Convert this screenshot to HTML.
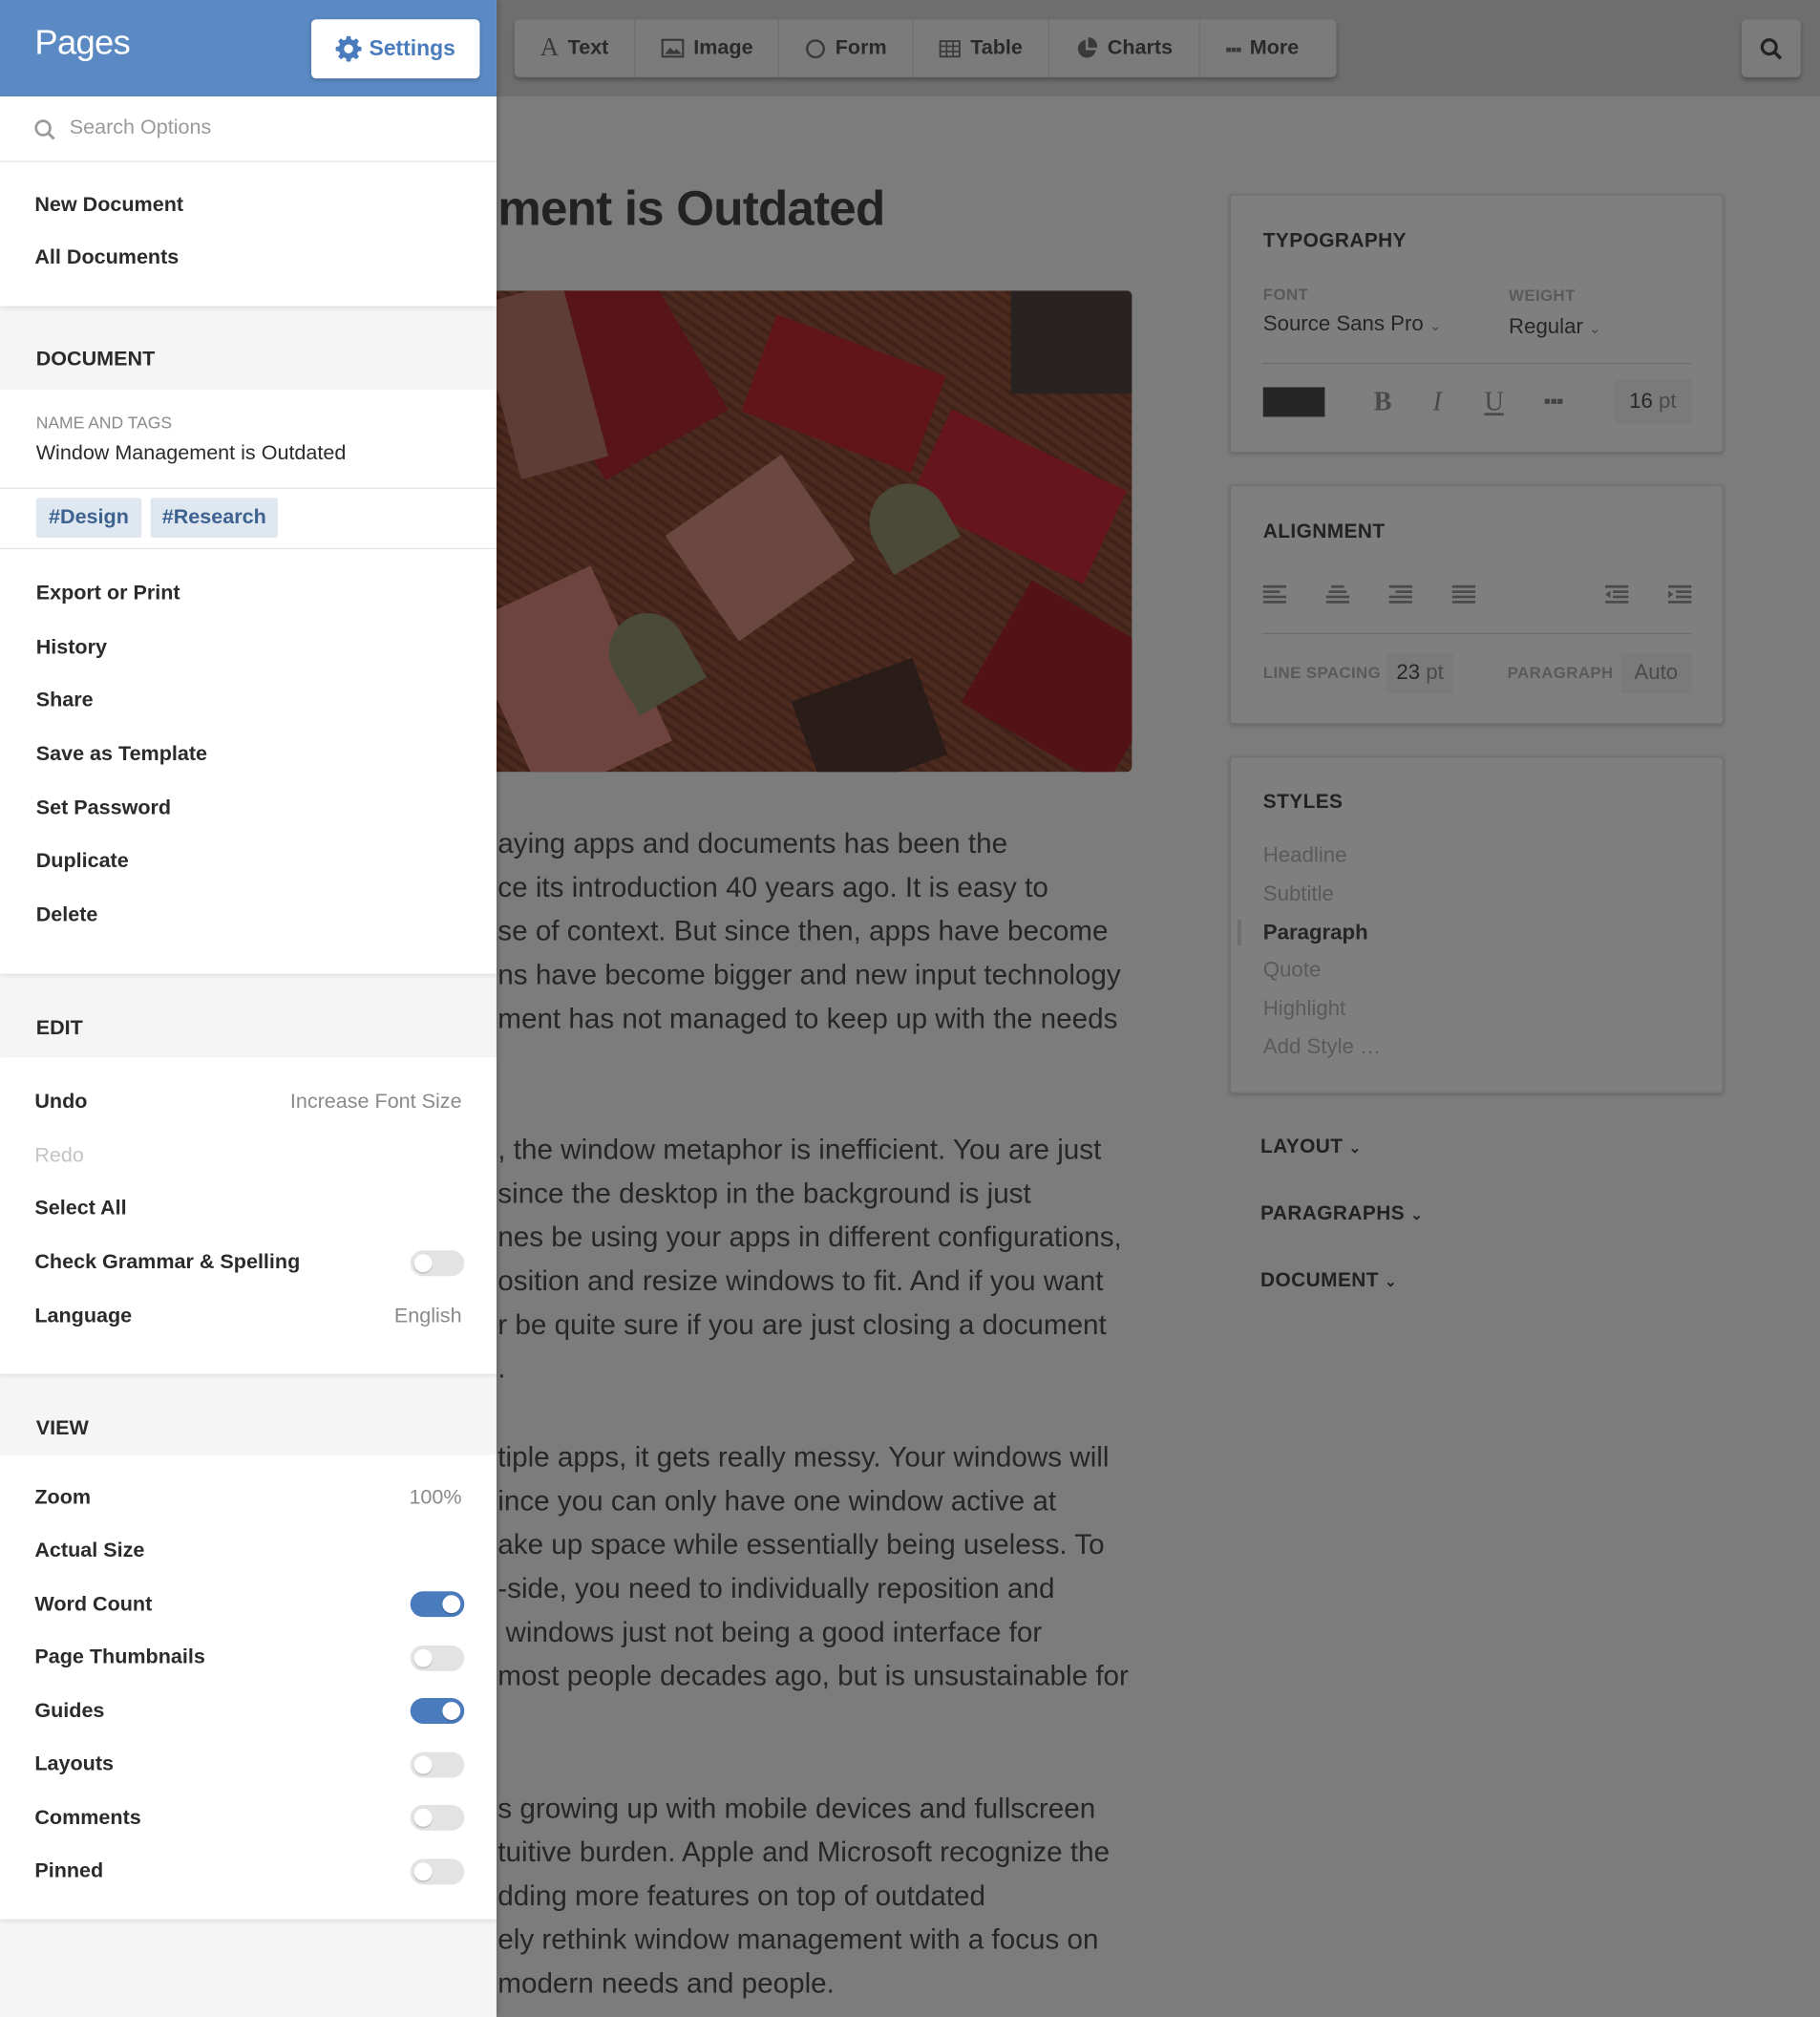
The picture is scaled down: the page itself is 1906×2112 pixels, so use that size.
<!DOCTYPE html>
<html><head><meta charset="utf-8"><style>
*{box-sizing:border-box;margin:0;padding:0}
html,body{width:1906px;height:2112px;overflow:hidden;background:#7c7c7c}
#r{position:absolute;left:0;top:0;width:1415px;height:1568px;transform:scale(1.34700);transform-origin:0 0;font-family:"Liberation Sans",sans-serif;background:#7c7c7c;overflow:hidden}
.a{position:absolute;white-space:nowrap}
.top{left:386px;top:0;width:1029px;height:75px;background:#6e6e6e}
.tb{left:400px;top:15px;width:639px;height:45px;background:#7b7b7b;border-radius:4px;box-shadow:0 2px 3px rgba(0,0,0,.25);display:flex;align-items:center;font-size:16px;font-weight:bold;color:#2a2a2a}
.tb div{padding:0 20px;border-right:1px solid #707070;height:45px;display:flex;align-items:center;gap:7px}
.tb div:last-child{border:none}
.ico{color:#3a3a3a;font-weight:normal}
.body{left:387px;font-size:22px;color:#262626;line-height:34px}
.pan{left:956px;width:384px;background:#7f7f7f;border:1px solid #717171;border-radius:3px;box-shadow:0 1px 3px rgba(0,0,0,.2)}
.h{font-size:15.5px;font-weight:bold;color:#222;letter-spacing:.3px}
.lab{font-size:12.5px;color:#5a5a5a;font-weight:bold;letter-spacing:.3px}
.sb{left:0;top:0;width:386px;height:1568px;background:#f5f5f5;box-shadow:2px 0 4px rgba(0,0,0,.15)}
.w{position:absolute;left:0;width:386px;background:#fff}
.it{position:absolute;left:27px;font-size:16px;font-weight:bold;color:#2b2b2b;transform:translateY(-50%)}
.rt{position:absolute;right:27px;font-size:16px;color:#8a8a8a;transform:translateY(-50%)}
.sh{position:absolute;left:28px;font-size:16px;font-weight:bold;color:#2b2b2b;transform:translateY(-50%)}
.tg{position:absolute;left:319px;width:42px;height:20px;border-radius:10px;background:#e3e3e3;transform:translateY(-50%)}
.tg::after{content:"";position:absolute;left:3px;top:3px;width:14px;height:14px;border-radius:7px;background:#fff;box-shadow:0 1px 1px rgba(0,0,0,.2)}
.tg.on{background:#4a7bbd}.tg.on::after{left:25px}
.img div{position:absolute}
</style></head><body><div id="r">
<div class="a top"></div>
<div class="a tb">
<div><span class="ico" style="font-family:'Liberation Serif';font-size:20px">A</span>Text</div>
<div><svg width="18" height="15"><rect x="1" y="1" width="16" height="13" fill="none" stroke="#3a3a3a" stroke-width="1.6"/><path d="M3 12l4-5 3 3 2-2 4 4z" fill="#3a3a3a"/></svg>Image</div>
<div><svg width="16" height="16"><circle cx="8" cy="8" r="6.5" fill="none" stroke="#3a3a3a" stroke-width="1.8"/></svg>Form</div>
<div><svg width="17" height="14"><rect x="1" y="1" width="15" height="12" fill="none" stroke="#3a3a3a" stroke-width="1.4"/><path d="M1 5h15M1 9h15M6 1v12M11 1v12" stroke="#3a3a3a" stroke-width="1.2"/></svg>Table</div>
<div><svg width="18" height="18"><path d="M8 2A7 7 0 1 0 16 10H8z" fill="#3a3a3a"/><path d="M10 0A7 7 0 0 1 17 8H10z" fill="#3a3a3a"/></svg>Charts</div>
<div><span class="ico" style="font-size:14px;letter-spacing:-1px">▪▪▪</span>More</div>
</div>
<div class="a" style="left:1354px;top:15px;width:46px;height:45px;background:#7b7b7b;border-radius:4px;box-shadow:0 2px 3px rgba(0,0,0,.25)"><svg style="position:absolute;left:14px;top:14px" width="18" height="18"><circle cx="7.5" cy="7.5" r="5.5" fill="none" stroke="#222" stroke-width="2.4"/><path d="M11.5 11.5l5 5" stroke="#222" stroke-width="2.6"/></svg></div>

<div class="a" style="left:387px;top:142px;font-size:38px;color:#222;font-weight:bold;letter-spacing:-.6px">ment is Outdated</div>
<div class="a img" style="left:386px;top:226px;width:494px;height:374px;border-radius:0 4px 4px 0;overflow:hidden;background:repeating-linear-gradient(35deg,#3f2219 0 3px,#4d2a1e 3px 7px),#442519">
<div style="left:40px;top:-20px;width:110px;height:150px;background:#581519;transform:rotate(-30deg)"></div>
<div style="left:0;top:0;width:70px;height:140px;background:#5e3d36;transform:rotate(-15deg)"></div>
<div style="left:200px;top:40px;width:140px;height:80px;background:#621519;transform:rotate(20deg)"></div>
<div style="left:330px;top:120px;width:150px;height:80px;background:#65151b;transform:rotate(25deg)"></div>
<div style="left:150px;top:150px;width:110px;height:100px;background:#6a4840;transform:rotate(-35deg)"></div>
<div style="left:290px;top:150px;width:60px;height:60px;background:#4b4a36;border-radius:30px 30px 0 0;transform:rotate(-30deg)"></div>
<div style="left:0;top:230px;width:110px;height:150px;background:#6d453e;transform:rotate(-25deg)"></div>
<div style="left:90px;top:250px;width:60px;height:70px;background:#4a4a38;border-radius:30px 30px 0 0;transform:rotate(-30deg)"></div>
<div style="left:380px;top:250px;width:130px;height:110px;background:#521216;transform:rotate(30deg)"></div>
<div style="left:240px;top:300px;width:100px;height:80px;background:#2a1c18;transform:rotate(-20deg)"></div>
<div style="left:400px;top:0;width:94px;height:80px;background:#282320"></div>
</div>
<div class="a body" style="top:639px">aying apps and documents has been the<br>ce its introduction 40 years ago. It is easy to<br>se of context. But since then, apps have become<br>ns have become bigger and new input technology<br>ment has not managed to keep up with the needs</div>
<div class="a body" style="top:877px">, the window metaphor is inefficient. You are just<br>since the desktop in the background is just<br>nes be using your apps in different configurations,<br>osition and resize windows to fit. And if you want<br>r be quite sure if you are just closing a document<br>.</div>
<div class="a body" style="top:1116px">tiple apps, it gets really messy. Your windows will<br>ince you can only have one window active at<br>ake up space while essentially being useless. To<br>-side, you need to individually reposition and<br>&nbsp;windows just not being a good interface for<br>most people decades ago, but is unsustainable for</div>
<div class="a body" style="top:1389px">s growing up with mobile devices and fullscreen<br>tuitive burden. Apple and Microsoft recognize the<br>dding more features on top of outdated<br>ely rethink window management with a focus on<br>modern needs and people.</div>

<div class="a pan" style="top:151px;height:201px">
<div class="a h" style="left:25px;top:27px">TYPOGRAPHY</div>
<div class="a lab" style="left:25px;top:70px">FONT</div>
<div class="a lab" style="left:216px;top:71px">WEIGHT</div>
<div class="a" style="left:25px;top:91px;font-size:16.5px;color:#262626">Source Sans Pro <span style="font-size:11px;color:#444">⌄</span></div>
<div class="a" style="left:216px;top:93px;font-size:16.5px;color:#262626">Regular <span style="font-size:11px;color:#444">⌄</span></div>
<div class="a" style="left:24px;top:130px;width:334px;height:1px;background:#6d6d6d"></div>
<div class="a" style="left:25px;top:149px;width:48px;height:23px;background:#262626"></div>
<div class="a" style="left:111px;top:148px;font-family:'Liberation Serif';font-weight:bold;font-size:21px;color:#4a4a4a">B</div>
<div class="a" style="left:157px;top:148px;font-family:'Liberation Serif';font-style:italic;font-size:21px;color:#4a4a4a">I</div>
<div class="a" style="left:197px;top:148px;font-family:'Liberation Serif';text-decoration:underline;font-size:21px;color:#4a4a4a">U</div>
<div class="a" style="left:244px;top:158px;width:14px;height:4px;background:repeating-linear-gradient(90deg,#444 0 4px,transparent 4px 5px)"></div>
<div class="a" style="left:298px;top:143px;width:60px;height:34px;background:#7a7a7a;font-size:16.5px;color:#262626;text-align:center;line-height:34px">16 <span style="color:#4a4a4a">pt</span></div>
</div>

<div class="a pan" style="top:377px;height:186px">
<div class="a h" style="left:25px;top:27px">ALIGNMENT</div>
<svg class="a" style="left:24px;top:76px" width="340" height="18" fill="#4a4a4a">
<g><rect x="1" y="1" width="18" height="2"/><rect x="1" y="5" width="13" height="2"/><rect x="1" y="9" width="18" height="2"/><rect x="1" y="13" width="18" height="2"/></g>
<g transform="translate(49 0)"><rect x="5" y="1" width="10" height="2"/><rect x="3" y="5" width="14" height="2"/><rect x="1" y="9" width="18" height="2"/><rect x="1" y="13" width="18" height="2"/></g>
<g transform="translate(98 0)"><rect x="1" y="1" width="18" height="2"/><rect x="6" y="5" width="13" height="2"/><rect x="1" y="9" width="18" height="2"/><rect x="1" y="13" width="18" height="2"/></g>
<g transform="translate(147 0)"><rect x="1" y="1" width="18" height="2"/><rect x="1" y="5" width="18" height="2"/><rect x="1" y="9" width="18" height="2"/><rect x="1" y="13" width="18" height="2"/></g>
<g transform="translate(266 0)"><rect x="1" y="1" width="18" height="2"/><rect x="7" y="5" width="12" height="2"/><rect x="7" y="9" width="12" height="2"/><rect x="1" y="13" width="18" height="2"/><path d="M1 8l4-3v6z"/></g>
<g transform="translate(315 0)"><rect x="1" y="1" width="18" height="2"/><rect x="7" y="5" width="12" height="2"/><rect x="7" y="9" width="12" height="2"/><rect x="1" y="13" width="18" height="2"/><path d="M5 8l-4-3v6z"/></g>
</svg>
<div class="a" style="left:24px;top:114px;width:334px;height:1px;background:#6d6d6d"></div>
<div class="a lab" style="left:25px;top:138px">LINE SPACING</div>
<div class="a" style="left:121px;top:130px;width:52px;height:31px;background:#7a7a7a;font-size:16.5px;color:#262626;text-align:center;line-height:31px">23 <span style="color:#4a4a4a">pt</span></div>
<div class="a lab" style="left:215px;top:138px">PARAGRAPH</div>
<div class="a" style="left:303px;top:130px;width:55px;height:31px;background:#7a7a7a;font-size:16.5px;color:#4a4a4a;text-align:center;line-height:31px">Auto</div>
</div>

<div class="a pan" style="top:588px;height:262px">
<div class="a h" style="left:25px;top:26px">STYLES</div>
<div class="a" style="left:25px;top:62px;font-size:16.5px;color:#5a5a5a;line-height:29.8px">Headline<br>Subtitle<br><b style="color:#262626">Paragraph</b><br>Quote<br>Highlight<br>Add Style …</div>
<div class="a" style="left:5px;top:126px;width:3px;height:20px;background:#6e6e6e"></div>
</div>
<div class="a h" style="left:980px;top:883px">LAYOUT <span style="font-size:11px">⌄</span></div>
<div class="a h" style="left:980px;top:935px">PARAGRAPHS <span style="font-size:11px">⌄</span></div>
<div class="a h" style="left:980px;top:987px">DOCUMENT <span style="font-size:11px">⌄</span></div>

<!-- sidebar -->
<div class="a sb">
<div class="w" style="top:0;height:75px;background:#5a89c3">
<div class="a" style="left:27px;top:18px;font-size:27px;color:#fff;letter-spacing:-.5px">Pages</div>
<div class="a" style="left:242px;top:15px;width:131px;height:46px;background:#fff;border-radius:4px;box-shadow:0 1px 3px rgba(0,0,0,.2);color:#4a7bbd;font-size:17px;font-weight:bold;display:flex;align-items:center;justify-content:center;gap:6px">
<svg width="20" height="20" viewBox="0 0 20 20"><path fill="#4a7bbd" fill-rule="evenodd" d="M8.5 0h3l.5 2.6 1.8.8 2.2-1.5 2.1 2.1-1.5 2.2.8 1.8 2.6.5v3l-2.6.5-.8 1.8 1.5 2.2-2.1 2.1-2.2-1.5-1.8.8-.5 2.6h-3L8 17.4l-1.8-.8-2.2 1.5-2.1-2.1 1.5-2.2-.8-1.8L0 11.5v-3L2.6 8l.8-1.8L1.9 4l2.1-2.1 2.2 1.5L8 2.6zM10 6.5a3.5 3.5 0 1 0 0 7 3.5 3.5 0 0 0 0-7z"/></svg>Settings</div>
</div>
<div class="w" style="top:75px;height:163px;box-shadow:0 2px 3px rgba(0,0,0,.08)">
<svg class="a" style="left:26px;top:17px" width="18" height="18"><circle cx="7.5" cy="7.5" r="5.5" fill="none" stroke="#9a9a9a" stroke-width="2"/><path d="M11.5 11.5l4.5 4.5" stroke="#9a9a9a" stroke-width="2.2"/></svg>
<div class="a" style="left:54px;top:16px;font-size:16px;color:#9a9a9a">Search Options</div>
<div class="a" style="left:0;top:50px;width:386px;height:1px;background:#e6e6e6"></div>
<div class="it" style="top:85px">New Document</div>
<div class="it" style="top:126px">All Documents</div>
</div>
<div class="sh" style="top:280px">DOCUMENT</div>
<div class="w" style="top:303px;height:454px;box-shadow:0 2px 3px rgba(0,0,0,.08)">
<div class="a" style="left:28px;top:18px;font-size:13px;color:#8a8a8a">NAME AND TAGS</div>
<div class="a" style="left:28px;top:41px;font-size:16px;color:#2b2b2b">Window Management is Outdated</div>
<div class="a" style="left:0;top:76px;width:386px;height:1px;background:#e6e6e6"></div>
<div class="a" style="left:28px;top:84px;width:82px;height:31px;background:#dfe7f1;border-radius:2px;color:#3d6290;font-size:16px;font-weight:bold;line-height:31px;text-align:center">#Design</div>
<div class="a" style="left:117px;top:84px;width:99px;height:31px;background:#dfe7f1;border-radius:2px;color:#3d6290;font-size:16px;font-weight:bold;line-height:31px;text-align:center">#Research</div>
<div class="a" style="left:0;top:123px;width:386px;height:1px;background:#e6e6e6"></div>
<div class="it" style="left:28px;top:159px">Export or Print</div>
<div class="it" style="left:28px;top:201px">History</div>
<div class="it" style="left:28px;top:242px">Share</div>
<div class="it" style="left:28px;top:284px">Save as Template</div>
<div class="it" style="left:28px;top:326px">Set Password</div>
<div class="it" style="left:28px;top:367px">Duplicate</div>
<div class="it" style="left:28px;top:409px">Delete</div>
</div>
<div class="sh" style="top:800px">EDIT</div>
<div class="w" style="top:822px;height:246px;box-shadow:0 2px 3px rgba(0,0,0,.08)">
<div class="it" style="top:35px">Undo</div><div class="rt" style="top:35px">Increase Font Size</div>
<div class="it" style="top:77px;color:#c4c4c4;font-weight:normal">Redo</div>
<div class="it" style="top:118px">Select All</div>
<div class="it" style="top:160px">Check Grammar &amp; Spelling</div><div class="tg" style="top:160px"></div>
<div class="it" style="top:202px">Language</div><div class="rt" style="top:202px">English</div>
</div>
<div class="sh" style="top:1111px">VIEW</div>
<div class="w" style="top:1131px;height:361px;box-shadow:0 2px 3px rgba(0,0,0,.08)">
<div class="it" style="top:34px">Zoom</div><div class="rt" style="top:34px">100%</div>
<div class="it" style="top:75px">Actual Size</div>
<div class="it" style="top:117px">Word Count</div><div class="tg on" style="top:116px"></div>
<div class="it" style="top:158px">Page Thumbnails</div><div class="tg" style="top:158px"></div>
<div class="it" style="top:200px">Guides</div><div class="tg on" style="top:199px"></div>
<div class="it" style="top:241px">Layouts</div><div class="tg" style="top:241px"></div>
<div class="it" style="top:283px">Comments</div><div class="tg" style="top:282px"></div>
<div class="it" style="top:324px">Pinned</div><div class="tg" style="top:324px"></div>
</div>
</div>
</div></body></html>
